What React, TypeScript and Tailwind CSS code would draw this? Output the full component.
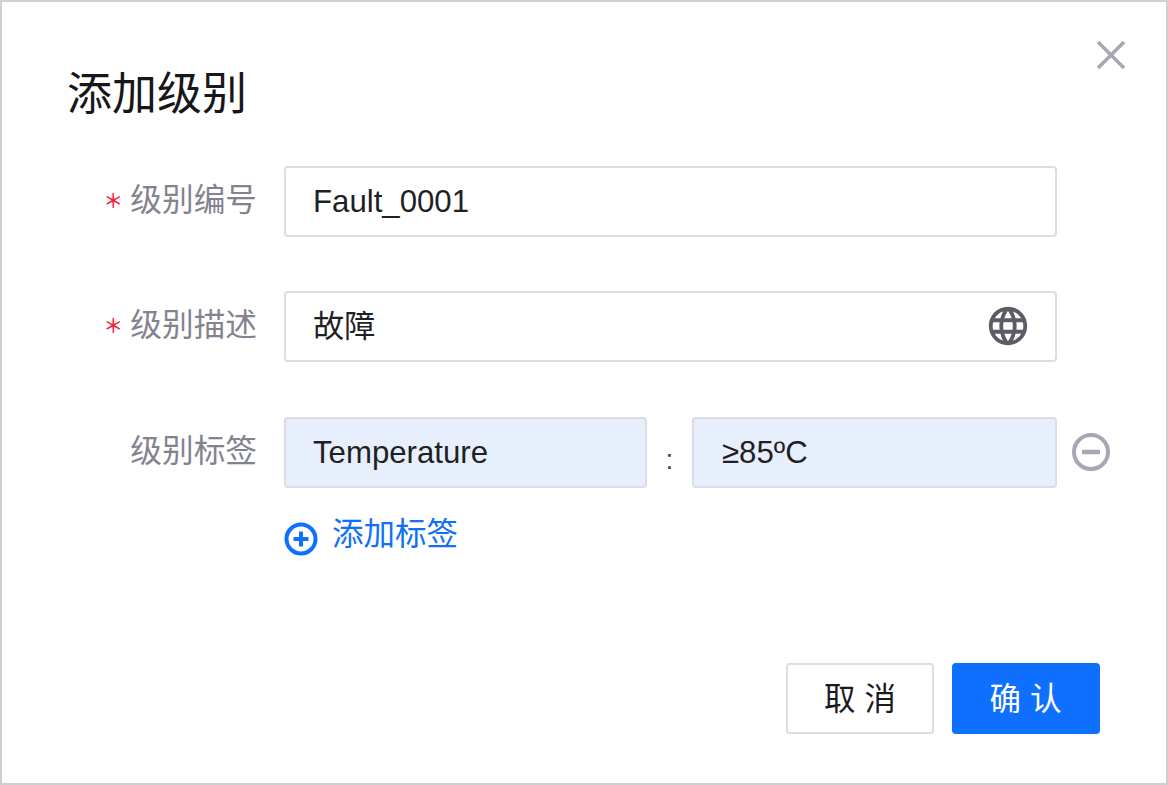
import React from 'react';
import { MdLanguage } from 'react-icons/md';

const FONT = "font-['Liberation_Sans','Noto_Sans_CJK_SC',sans-serif]";

const Label: React.FC<{ text: string; required?: boolean }> = ({ text, required }) => (
  <div className="w-[190px] shrink-0 flex justify-end items-center gap-[7px] text-[31.7px] text-[#83838f] leading-none">
    {required && <span className="text-[#f5203f] text-[20px] font-medium leading-none -mt-[1px]">＊</span>}
    <span className="-mt-[2px]">{text}</span>
  </div>
);

const Field: React.FC<{ className?: string; children: React.ReactNode }> = ({ className, children }) => (
  <div className={`h-[71px] border-2 border-[#dcdce4] rounded-[4px] pl-[27px] pr-[26px] pt-[2px] flex items-center justify-between text-[31.2px] text-[#1f1f24] ${className ?? ''}`}>
    {children}
  </div>
);

export default function App() {
  return (
    <div className={`w-[1168px] h-[785px] bg-white border-2 border-[#cfcfcf] ${FONT} flex flex-col`}>
      {/* Header */}
      <div className="flex justify-between items-start pl-[65px] pr-[39px] pt-[67px] h-[164px]">
        <h1 className="text-[45px] leading-[52px] text-[#17171a] font-normal">添加级别</h1>
        <svg className="-mt-[30px]" width="32" height="32" viewBox="0 0 32 32" fill="none" stroke="#a6a7b5" strokeWidth="3.5">
          <path d="M3 3 L29 29 M29 3 L3 29" />
        </svg>
      </div>

      {/* Form */}
      <div className="flex flex-col pl-[65px]">
        <div className="flex items-center gap-[27px]">
          <Label text="级别编号" required />
          <Field className="w-[773px]">Fault_0001</Field>
        </div>

        <div className="flex items-center gap-[27px] mt-[54px]">
          <Label text="级别描述" required />
          <Field className="w-[773px]">
            <span>故障</span>
            <MdLanguage size={46} color="#5d5c66" className="-mr-[2px] -mt-[4px]" />
          </Field>
        </div>

        <div className="flex items-center mt-[55px]">
          <Label text="级别标签" />
          <Field className="w-[363px] bg-[#e8effc] ml-[27px] text-[#0a0a0c]">Temperature</Field>
          <span className="w-[45px] text-center text-[28px] leading-none text-[#444] mt-[14px]">:</span>
          <Field className="w-[365px] bg-[#e8effc] text-[#0a0a0c] !pl-[28px]">≥85ºC</Field>
          <svg className="ml-[14px] -mt-[2px]" width="40" height="40" viewBox="0 0 40 40" fill="none" stroke="#a6a7b5" strokeWidth="4">
            <circle cx="20" cy="20" r="17" />
            <path d="M11 20 H29" strokeWidth="4.5" />
          </svg>
        </div>

        <div className="flex items-center ml-[217px] mt-[26px] gap-[14px] text-[#1170f5] text-[31.5px] leading-[44px]">
          <svg className="mt-[8px]" width="34" height="34" viewBox="0 0 34 34" fill="none" stroke="#0f6fff" strokeWidth="4">
            <circle cx="17" cy="17" r="14.5" />
            <path d="M9.5 17 H24.5 M17 9.5 V24.5" />
          </svg>
          <span className="-mt-[2px]">添加标签</span>
        </div>
      </div>

      {/* Actions */}
      <div className="flex justify-end gap-[18px] pr-[66px] mt-[107px]">
        <button className="w-[148px] h-[71px] border-2 border-[#dcdce4] rounded-[4px] bg-white text-[#1b1b1f] text-[31.5px] tracking-[9px] pl-[9px] pt-[2px]">取消</button>
        <button className="w-[148px] h-[71px] rounded-[4px] bg-[#0f6fff] text-white text-[31.5px] tracking-[9px] pl-[8px] pt-[2px]">确认</button>
      </div>
    </div>
  );
}
